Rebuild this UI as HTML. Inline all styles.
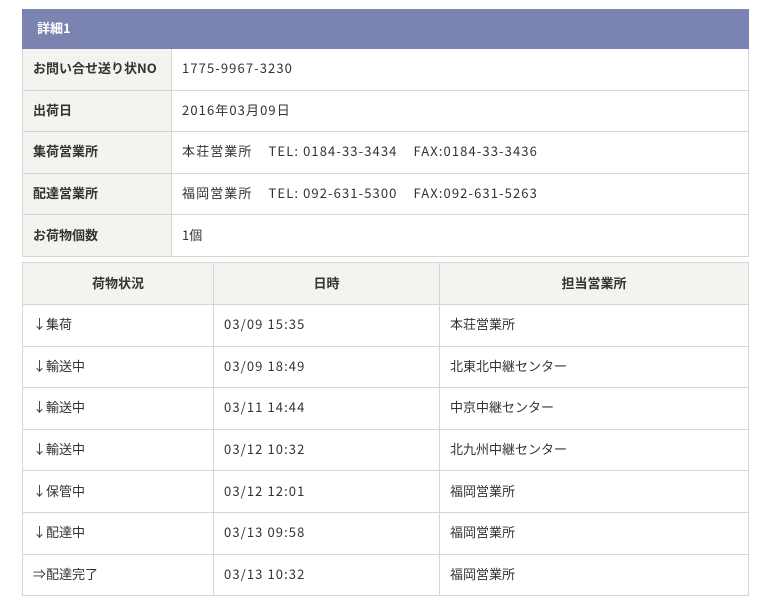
<!DOCTYPE html>
<html><head><meta charset="utf-8"><style>
body{margin:0;background:#fff;font-family:"Noto Sans CJK JP",sans-serif;font-size:13px;color:#333;}
table{position:absolute;left:22px;width:727px;border-collapse:collapse;table-layout:fixed;}
td,th{border:1px solid #d6d6d6;padding:0 0 2px 10px;text-align:left;font-weight:normal;line-height:16px}
.n{letter-spacing:1.1px}
#t1{top:9px}
#t1 .h{background:#7b83b1;color:#fff;font-weight:bold;height:36px;padding-left:14px;border-color:#7b83b1}
#t1 td{height:38.6px}
#t1 td.l{background:#f3f3ef;font-weight:bold}
#t2{top:262px}
#t2 th{background:#f3f3ef;font-weight:bold;text-align:center;height:39px;padding:0 0 2px 0}
#t2 td{height:38.6px}
</style></head><body>
<table id="t1">
<colgroup><col style="width:149px"><col></colgroup>
<tr><td class="h" colspan="2">詳細1</td></tr>
<tr><td class="l">お問い合せ送り状NO</td><td class="n">1775-9967-3230</td></tr>
<tr><td class="l">出荷日</td><td class="n">2016年03月09日</td></tr>
<tr><td class="l">集荷営業所</td><td class="n">本荘営業所&nbsp;&nbsp;&nbsp;&nbsp;TEL: 0184-33-3434&nbsp;&nbsp;&nbsp;&nbsp;FAX:0184-33-3436</td></tr>
<tr><td class="l">配達営業所</td><td class="n">福岡営業所&nbsp;&nbsp;&nbsp;&nbsp;TEL: 092-631-5300&nbsp;&nbsp;&nbsp;&nbsp;FAX:092-631-5263</td></tr>
<tr><td class="l">お荷物個数</td><td>1個</td></tr>
</table>
<table id="t2">
<colgroup><col style="width:191px"><col style="width:226px"><col></colgroup>
<tr><th>荷物状況</th><th>日時</th><th>担当営業所</th></tr>
<tr><td>↓集荷</td><td class="n">03/09 15:35</td><td>本荘営業所</td></tr>
<tr><td>↓輸送中</td><td class="n">03/09 18:49</td><td>北東北中継センター</td></tr>
<tr><td>↓輸送中</td><td class="n">03/11 14:44</td><td>中京中継センター</td></tr>
<tr><td>↓輸送中</td><td class="n">03/12 10:32</td><td>北九州中継センター</td></tr>
<tr><td>↓保管中</td><td class="n">03/12 12:01</td><td>福岡営業所</td></tr>
<tr><td>↓配達中</td><td class="n">03/13 09:58</td><td>福岡営業所</td></tr>
<tr><td>⇒配達完了</td><td class="n">03/13 10:32</td><td>福岡営業所</td></tr>
</table>
</body></html>
